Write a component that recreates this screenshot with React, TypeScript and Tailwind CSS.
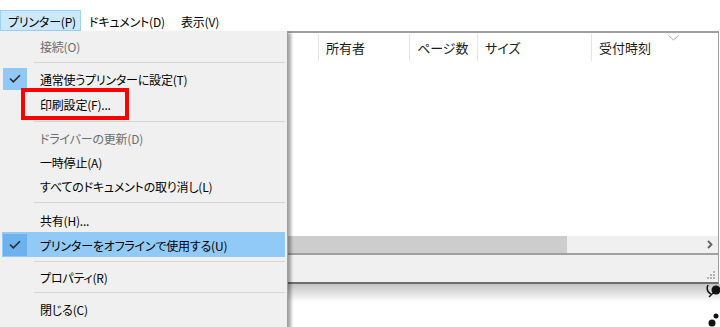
import React from "react";

type Item =
  | { kind: "item"; label: string; h: string; disabled?: boolean; checked?: boolean; hl?: boolean }
  | { kind: "sep"; h: string };

const items: Item[] = [
  { kind: "item", label: "接続(O)", h: "h-[24px]", disabled: true },
  { kind: "sep", h: "h-[8px]" },
  { kind: "item", label: "通常使うプリンターに設定(T)", h: "h-[25px]", checked: true },
  { kind: "item", label: "印刷設定(F)...", h: "h-[25px]" },
  { kind: "sep", h: "h-[10px]" },
  { kind: "item", label: "ドライバーの更新(D)", h: "h-[24px]", disabled: true },
  { kind: "item", label: "一時停止(A)", h: "h-[24px]" },
  { kind: "item", label: "すべてのドキュメントの取り消し(L)", h: "h-[23px]" },
  { kind: "sep", h: "h-[10px]" },
  { kind: "item", label: "共有(H)...", h: "h-[25px]" },
  { kind: "item", label: "プリンターをオフラインで使用する(U)", h: "h-[25px]", checked: true, hl: true },
  { kind: "sep", h: "h-[8px]" },
  { kind: "item", label: "プロパティ(R)", h: "h-[23px]" },
  { kind: "sep", h: "h-[8px]" },
  { kind: "item", label: "閉じる(C)", h: "h-[25px]" },
];

function Check() {
  return (
    <svg width="12" height="9" viewBox="0 0 12 9" className="block">
      <polyline points="1,4.5 4.3,7.8 11,1.2" fill="none" stroke="#2b2b2b" strokeWidth="1.6" />
    </svg>
  );
}

function Menu() {
  return (
    <div className="absolute left-0 top-[31px] w-[288px] h-[300px] bg-[#f0f0f0] border-r border-[#a0a0a0] shadow-[3px_2px_3px_rgba(0,0,0,0.35)] pt-[3px]">
      {items.map((it, i) =>
        it.kind === "sep" ? (
          <div key={i} className={`${it.h} flex items-center pl-[34px] pr-[2px]`}>
            <div className="h-px w-full bg-[#d5d5d5]" />
          </div>
        ) : (
          <div
            key={i}
            className={`${it.h} mx-[2px] flex items-center ${it.hl ? "bg-[#91c9f7]" : ""}`}
          >
            <div
              className={`ml-[1px] w-[24px] h-[22px] flex items-center justify-center ${
                it.checked ? (it.hl ? "bg-[#6bb2ef]" : "bg-[#90c8f6]") : ""
              }`}
            >
              {it.checked && <Check />}
            </div>
            <span
              className={`ml-[13px] pt-[2px] text-[12px] tracking-[-0.2px] leading-none whitespace-nowrap ${
                it.disabled ? "text-[#6d6d6d]" : "text-black"
              }`}
            >
              {it.label}
            </span>
          </div>
        )
      )}
      <div className="absolute left-[21px] top-[57px] w-[108px] h-[32px] border-[4px] border-[#ff0000]" />
    </div>
  );
}

export default function App() {
  return (
    <div className="relative w-[720px] h-[327px] overflow-hidden bg-white font-['Noto_Sans_CJK_JP',sans-serif] [font-feature-settings:'palt'] text-black">
      {/* menu bar */}
      <div className="h-[31px] pt-[10px] flex text-[12px] tracking-[-0.2px] leading-none whitespace-nowrap">
        <div className="h-[21px] w-[81px] flex items-center pl-[7px] pt-[2px] bg-[#cce8ff] border border-[#99d1ff]">
          プリンター(P)
        </div>
        <div className="h-[21px] w-[100px] flex items-center pl-[8px] pt-[2px]">ドキュメント(D)</div>
        <div className="h-[21px] flex items-center pt-[2px]">表示(V)</div>
      </div>

      {/* window body */}
      <div className="w-[719px]">
        <div className="h-[224px] border-t-2 border-b-2 border-r border-[#a0a0a0] bg-white flex flex-col">
          <div className="h-[29px] flex text-[13px] leading-none text-[#1a1a1a] relative">
            <div className="w-[319px] border-r border-[#e5e5e5] my-[1px]" />
            <div className="w-[91px] border-r border-[#e5e5e5] my-[1px] pl-[7px] flex items-center">所有者</div>
            <div className="w-[68px] border-r border-[#e5e5e5] my-[1px] pl-[7px] flex items-center">ページ数</div>
            <div className="w-[114px] border-r border-[#e5e5e5] my-[1px] pl-[7px] flex items-center">サイズ</div>
            <div className="flex-1 pl-[7px] flex items-center relative">
              受付時刻
              <svg width="11" height="6" viewBox="0 0 11 6" className="absolute left-[76px] top-[2px]">
                <polyline points="0.5,0.5 5.5,5 10.5,0.5" fill="none" stroke="#a8a8a8" strokeWidth="1" />
              </svg>
            </div>
          </div>
          <div className="flex-1" />
          <div className="h-[17px] flex bg-[#f0f0f0]">
            <div className="w-[567px] bg-[#cdcdcd]" />
            <div className="flex-1" />
            <div className="w-[17px] flex items-center justify-center">
              <svg width="6" height="9" viewBox="0 0 6 9">
                <polyline points="1,1 4.5,4.5 1,8" fill="none" stroke="#606060" strokeWidth="1.8" />
              </svg>
            </div>
          </div>
        </div>
        <div className="h-[29px] bg-[#f0f0f0] border-r border-b-2 border-[#a0a0a0] border-b-[#6e6e6e] flex justify-end items-end pr-[2px] pb-[2px]">
          <svg width="10" height="10" viewBox="0 0 10 10">
            <g fill="#b4b4b4">
              <rect x="7" y="1" width="2" height="2" />
              <rect x="4" y="4" width="2" height="2" />
              <rect x="7" y="4" width="2" height="2" />
              <rect x="1" y="7" width="2" height="2" />
              <rect x="4" y="7" width="2" height="2" />
              <rect x="7" y="7" width="2" height="2" />
            </g>
          </svg>
        </div>
      </div>
      <div className="h-[18px] bg-gradient-to-b from-[#c4c4c4] to-white" />

      {/* desktop icons peeking at right */}
      <svg className="absolute left-[706px] top-[284px]" width="14" height="15" viewBox="0 0 14 15">
        <path d="M2 1 C0 5 2 9 5 10" fill="none" stroke="#111" strokeWidth="1.5" />
        <circle cx="10" cy="6" r="4.5" fill="#111" />
        <path d="M3 13 L7 9" stroke="#111" strokeWidth="1.5" />
      </svg>
      <svg className="absolute left-[708px] top-[313px]" width="12" height="14" viewBox="0 0 12 14">
        <circle cx="8" cy="3" r="2.5" fill="#111" />
        <circle cx="4" cy="10" r="3.5" fill="#111" />
      </svg>

      <Menu />
    </div>
  );
}
